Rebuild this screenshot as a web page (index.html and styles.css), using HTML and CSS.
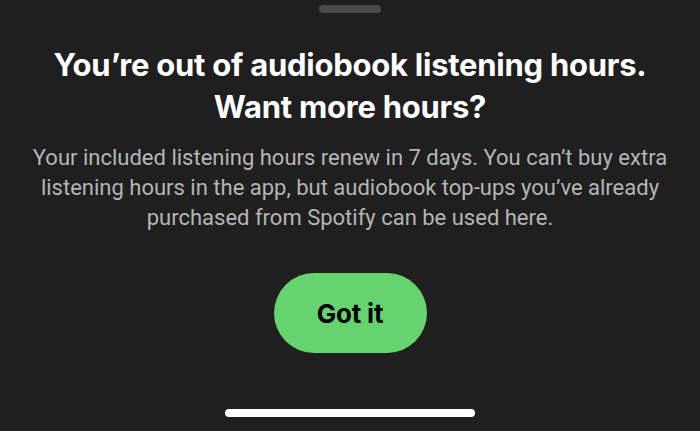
FILE: index.html
```html
<!DOCTYPE html>
<html>
<head>
<meta charset="utf-8">
<link rel="stylesheet" href="styles.css">
</head>
<body>
<div class="sheet">
  <div class="handle"></div>
  <h1 class="title">You’re out of audiobook listening hours.<br>Want more hours?</h1>
  <p class="body">Your included listening hours renew in 7 days. You can’t buy extra<br>listening hours in the app, but audiobook top-ups you’ve already<br>purchased from Spotify can be used here.</p>
  <button class="btn">Got it</button>
  <div class="home"></div>
</div>
</body>
</html>
```
FILE: styles.css
```css
html, body { margin: 0; padding: 0; }
body { background: #1f1f1f; width: 700px; height: 431px; overflow: hidden; }
.sheet { display: flex; flex-direction: column; align-items: center; height: 431px; }
.handle { width: 62px; height: 8px; border-radius: 4px; background: #4a4a4a; margin-top: 5px; }
.title { margin: 31px 0 0; font-family: Inter, sans-serif; font-weight: 700; font-size: 31px; line-height: 42px; color: #fff; text-align: center; letter-spacing: -0.25px; }
.body { margin: 15px 0 0; font-family: Roboto, sans-serif; font-size: 22px; line-height: 30px; color: #b5b5b5; text-align: center; letter-spacing: 0; }
.btn { margin-top: 40px; width: 153px; height: 80px; border: 0; border-radius: 40px; background: #65d46e; color: #000; font-family: Inter, sans-serif; font-weight: 700; font-size: 26px; letter-spacing: -0.2px; }
.home { margin-top: auto; margin-bottom: 14px; width: 250px; height: 8px; border-radius: 4px; background: #fff; }
```
